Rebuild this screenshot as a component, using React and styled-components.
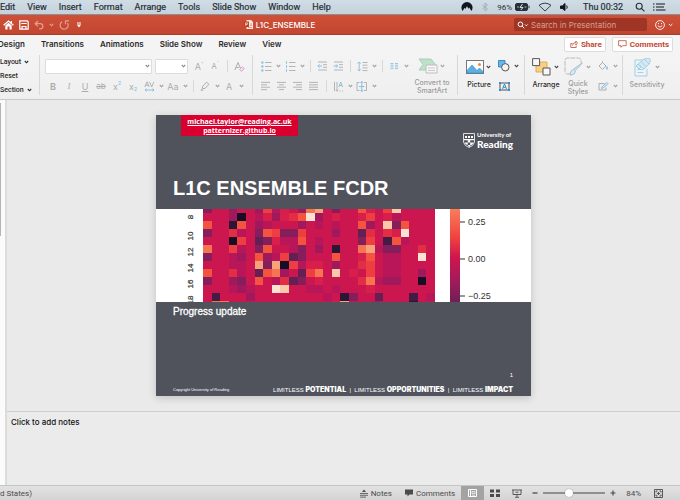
import React from "react";
import styled, { createGlobalStyle, css } from "styled-components";

const Global = createGlobalStyle`
  * { box-sizing: border-box; }
  html, body { margin: 0; padding: 0; }
  body { font-family: Inter, "Liberation Sans", sans-serif; font-size: 8px; color: #2b2b2b; }
  button, input, select { font: inherit; color: inherit; }
  button { background: none; border: 0; padding: 0; margin: 0; }
  svg { display: block; flex: none; }
`;

const RED = "#c43e1c";
const BLUE = "#2f8fd0";
const OFF = "#adadad";
const OFFBLUE = "#7dbde0";
const NARROW = 'Roboto, "Liberation Sans", sans-serif';

const Window = styled.div`
  display: flex;
  flex-direction: column;
  min-height: 100vh;
  overflow: hidden;
  background: #ebebeb;
`;

/* ---------- system menu ---------- */
const MenuBar = styled.nav`
  display: flex;
  align-items: center;
  justify-content: space-between;
  height: 15px;
  background: linear-gradient(#d0dde6, #c6d2da);
  border-bottom: 1px solid #8d8f93;
  color: #26303a;
  font-family: ${NARROW};
  font-size: 9px;
  white-space: nowrap;
`;
const Menus = styled.div`
  display: flex;
  gap: 12px;
`;
const MenuButton = styled.button`
  line-height: 14px;
  -webkit-text-stroke: 0.2px currentColor;
`;
const Tray = styled.div`
  display: flex;
  align-items: center;
  gap: 8px;
  padding-right: 14px;
`;
const Clock = styled.span`
  padding: 0 4px 0 6px;
  -webkit-text-stroke: 0.2px currentColor;
`;
const Charge = styled.span`
  display: flex;
  align-items: center;
  gap: 3px;
  font-size: 8px;
`;

/* ---------- title bar ---------- */
const TitleBar = styled.header`
  display: flex;
  align-items: center;
  height: 20px;
  background: linear-gradient(#cf5038, #c14630);
  border-bottom: 1px solid #a93c28;
  color: #fff;
`;
const QuickTools = styled.div`
  display: flex;
  flex: 245;
  align-items: center;
  gap: 5px;
  padding-left: 3px;
`;
const QuickButton = styled.button`
  display: flex;
  align-items: center;
  opacity: ${(p) => (p.$dim ? 0.45 : 1)};
`;
const DocTitle = styled.h1`
  display: flex;
  align-items: center;
  gap: 3px;
  margin: 0;
  font-size: 8px;
  font-weight: 500;
  white-space: nowrap;
`;
const TitleRight = styled.div`
  display: flex;
  flex: 365;
  align-items: center;
  justify-content: flex-end;
  gap: 8px;
  padding-right: 6px;
`;
const SearchBox = styled.label`
  display: flex;
  align-items: center;
  gap: 2px;
  width: 133px;
  height: 13px;
  padding-left: 3px;
  border-radius: 2px;
  background: #9f3625;
  input {
    flex: 1;
    min-width: 0;
    padding: 0;
    border: 0;
    outline: 0;
    background: none;
    font-size: 8px;
    line-height: 12px;
  }
  input::placeholder { color: #dd9c90; opacity: 1; }
`;

/* ---------- ribbon ---------- */
const Tabs = styled.nav`
  display: flex;
  align-items: center;
  justify-content: space-between;
  height: 18px;
  background: #f5f4f4;
`;
const TabList = styled.div`
  display: flex;
  gap: 16px;
`;
const Tab = styled.button`
  font-size: 8px;
  font-weight: 600;
  white-space: nowrap;
`;
const CutTab = styled(Tab)`
  display: flex;
  justify-content: flex-end;
  width: 25px;
  overflow: hidden;
`;
const Actions = styled.div`
  display: flex;
  gap: 6px;
  padding-right: 7px;
`;
const ActionButton = styled.button`
  display: flex;
  align-items: center;
  gap: 3px;
  height: 15px;
  padding: 0 3px 0 5px;
  border: 1px solid #dedcdc;
  border-radius: 2px;
  background: #fff;
  color: #c04a35;
  font-family: ${NARROW};
  font-size: 8px;
  font-weight: 700;
`;
const Ribbon = styled.section`
  display: flex;
  height: 47px;
  padding: 2px 0 4px;
  background: linear-gradient(#f5f4f4, #f0efef);
  border-bottom: 1px solid #c9c9c9;
`;
const Group = styled.div`
  display: flex;
  flex: none;
  width: ${(p) => (p.$w ? p.$w + "px" : "auto")};
  gap: ${(p) => p.$gap || 0}px;
  padding: 0 0 0 ${(p) => p.$pad || 0}px;
  border-left: ${(p) => (p.$first ? 0 : 1)}px solid #d9d8d8;
`;
const TextStack = styled.div`
  display: flex;
  flex-direction: column;
  align-items: flex-start;
`;
const TextButton = styled.button`
  display: flex;
  align-items: center;
  gap: 3px;
  line-height: 14px;
  font-family: ${NARROW};
  font-size: 7px;
  font-weight: 500;
`;
const Rows = styled.div`
  display: flex;
  flex-direction: column;
  gap: 4px;
  padding-top: 3px;
`;
const Row = styled.div`
  display: flex;
  align-items: center;
  height: 16px;
`;
const Tool = styled.button`
  display: flex;
  align-items: center;
  justify-content: center;
  width: 16px;
  height: 16px;
  color: ${OFF};
  font-size: ${(p) => (p.$small ? 8 : 9)}px;
  ${(p) => p.$bold && css`font-weight: 700;`}
  ${(p) => p.$italic && css`font-family: "Liberation Serif", serif; font-style: italic;`}
  ${(p) => p.$line && css`text-decoration: ${p.$line};`}
  sup, sub { font-size: 5px; line-height: 5px; color: ${OFFBLUE}; }
  sup { align-self: flex-start; padding-top: 3px; }
  sub { align-self: flex-end; padding-bottom: 2px; }
`;
const Drop = styled.button`
  display: flex;
  align-items: center;
  justify-content: center;
  width: 8px;
  height: 16px;
  color: ${(p) => (p.$on ? "#444" : "#a0a0a0")};
`;
const Sep = styled.span`
  width: 1px;
  height: 12px;
  margin: 0 3px 0 4px;
  background: #d9d8d8;
`;
const Pick = styled.div`
  display: flex;
  align-items: center;
  justify-content: flex-end;
  width: ${(p) => p.$w}px;
  height: 15px;
  margin-right: 3px;
  padding-right: 1px;
  border: 1px solid #dddcdc;
  border-radius: 1px;
  background: #fff;
  color: #888;
  select {
    flex: 1;
    min-width: 0;
    height: 12px;
    padding: 0;
    border: 0;
    outline: 0;
    appearance: none;
    background: none;
  }
`;
const BigTool = styled.div`
  display: flex;
  flex-direction: column;
  align-items: center;
  width: ${(p) => p.$w}px;
  padding-top: 2px;
  color: ${(p) => (p.$on ? "#2b2b2b" : "#9b9b9b")};
`;
const BigTop = styled.div`
  display: flex;
  align-items: center;
  height: 20px;
  gap: 1px;
`;
const BigLabel = styled.span`
  padding-top: 4px;
  font-size: 7px;
  font-weight: 500;
  line-height: 8px;
  text-align: center;
`;

/* ---------- workspace ---------- */
const Workspace = styled.main`
  display: flex;
  flex: 1;
`;
const ThumbPane = styled.aside`
  width: 7px;
  padding-top: 3px;
  background: #fbfbfb;
  border-right: 2px solid #dcdcdc;
`;
const Thumb = styled.div`
  width: 1px;
  height: 133px;
  background: #b4b4b4;
`;
const Editor = styled.div`
  display: flex;
  flex: 1;
  flex-direction: column;
`;
const Canvas = styled.div`
  display: flex;
  flex: 1;
  align-items: center;
  justify-content: center;
  background: #eaeaea;
`;
const Slide = styled.article`
  display: flex;
  flex-direction: column;
  width: 375px;
  background: #50535b;
  box-shadow: 0 2px 8px rgba(0, 0, 0, 0.18);
  color: #fff;
  font-family: "Liberation Sans", Arial, sans-serif;
`;
const SlideHead = styled.header`
  display: flex;
  flex-direction: column;
  justify-content: space-between;
  height: 94px;
`;
const SlideTop = styled.div`
  display: flex;
  align-items: flex-start;
  justify-content: space-between;
  padding: 0 18px 0 25px;
`;
const Contact = styled.address`
  display: flex;
  flex-direction: column;
  align-items: center;
  width: 117px;
  padding: 2px 0 1px;
  background: #d9002f;
  font-family: "Open Sans", sans-serif;
  font-size: 7px;
  font-style: normal;
  font-weight: 700;
  line-height: 9px;
  a { color: #fff; text-decoration: underline; }
`;
const Brand = styled.div`
  display: flex;
  align-items: center;
  gap: 2px;
  padding-top: 16px;
`;
const BrandText = styled.div`
  display: flex;
  flex-direction: column;
  font-family: Lato, sans-serif;
  font-size: 6px;
  font-weight: 700;
  line-height: 8px;
`;
const BrandName = styled.strong`
  font-size: 10px;
  line-height: 11px;
`;
const SlideTitle = styled.h2`
  margin: 0;
  padding: 0 17px 9px;
  font-size: 20px;
  line-height: 24px;
  font-weight: 700;
`;
const Chart = styled.svg`
  width: 100%;
  background: #fff;
`;
const SlideBody = styled.div`
  display: flex;
  flex-direction: column;
  justify-content: space-between;
  height: 94px;
  padding: 4px 18px 2px 17px;
`;
const Subtitle = styled.p`
  margin: 0;
  font-size: 10px;
  line-height: 12px;
  -webkit-text-stroke: 0.3px #fff;
`;
const SlideFoot = styled.footer`
  display: flex;
  flex-direction: column;
`;
const PageNumber = styled.span`
  align-self: flex-end;
  font-size: 6px;
  line-height: 8px;
`;
const FootLine = styled.div`
  display: flex;
  align-items: center;
  justify-content: space-between;
  padding-top: 7px;
  font-size: 4px;
  line-height: 8px;
`;
const Motto = styled.span`
  font-size: 6px;
  white-space: pre;
  b { font-family: Inter, sans-serif; font-size: 7px; font-weight: 900; }
`;
const Notes = styled.section`
  height: 74px;
  padding: 5px 4px;
  border-top: 1px solid #cfcfcf;
  color: #111;
  font-size: 8px;
  line-height: 10px;
  font-weight: 500;
`;

/* ---------- status bar ---------- */
const StatusBar = styled.footer`
  display: flex;
  align-items: center;
  justify-content: space-between;
  height: 15px;
  border-top: 1px solid #c4c6c4;
  background: linear-gradient(#e2e2e2, #d4d4d4);
  color: #4b4b4b;
  font-family: ${NARROW};
`;
const Language = styled.button`
  white-space: nowrap;
`;
const StatusTools = styled.div`
  display: flex;
  align-items: center;
  height: 14px;
  padding-right: 17px;
`;
const StatusButton = styled.button`
  display: flex;
  align-items: center;
  justify-content: center;
  gap: 3px;
  height: 14px;
  min-width: ${(p) => p.$w || 10}px;
  margin-right: ${(p) => p.$after || 0}px;
  background: ${(p) => (p.$active ? "#a3a3a3" : "none")};
  color: ${(p) => (p.$active ? "#fff" : "inherit")};
`;
const Zoom = styled.input`
  width: 62px;
  height: 10px;
  margin: 0 3px;
  appearance: none;
  background: linear-gradient(#8f8f8f, #8f8f8f) center / 100% 2px no-repeat;
  &::-webkit-slider-thumb {
    appearance: none;
    width: 8px;
    height: 8px;
    border-radius: 50%;
    background: #fff;
    box-shadow: 0 0 1px #666;
  }
`;

/* ---------- icons ---------- */
const Svg = ({ w = 12, h = 12, children, ...r }) => (
  <svg width={w} height={h} viewBox={`0 0 ${w} ${h}`} fill="none" stroke="currentColor" strokeWidth="1" aria-hidden="true" {...r}>
    {children}
  </svg>
);
const Chevron = () => (
  <Svg w={5} h={4} strokeWidth="1.1"><path d="M.8 1 2.5 2.8 4.2 1" /></Svg>
);
const Lines = ({ rows }) => (
  <Svg w={10} h={10} strokeWidth=".9">
    {rows.map(([x, w], i) => <path key={i} d={`M${x} ${1.4 + i * 2.4}h${w}`} />)}
  </Svg>
);
const ListIcon = ({ numbered }) => (
  <Svg w={11} h={11} strokeWidth=".9">
    {[1.5, 5.5, 9.5].map((y) => (
      <g key={y}>
        {numbered
          ? <path d={`M1.5 ${y - 1.3}v2.6`} stroke={OFFBLUE} />
          : <rect x=".4" y={y - 1} width="2" height="2" fill={OFFBLUE} stroke="none" />}
        <path d={`M4 ${y}h6.5`} />
      </g>
    ))}
  </Svg>
);
const IndentIcon = ({ right }) => (
  <Svg w={11} h={10} strokeWidth=".9">
    <path d="M1 1h9M6 3.7h4M6 6.3h4M1 9h9" />
    <path d={right ? "M.5 5h4M3 3.3 4.7 5 3 6.7" : "M1 5h4M2.5 3.3.8 5l1.7 1.7"} stroke={OFFBLUE} />
  </Svg>
);
const SpacingIcon = () => (
  <Svg w={11} h={11} strokeWidth=".9">
    <path d="M2.2 1v9M.6 2.6 2.2 1l1.6 1.6M.6 8.4 2.2 10l1.6-1.6" stroke={OFFBLUE} />
    <path d="M5.5 1.5h5M5.5 4.2h5M5.5 6.9h5M5.5 9.6h5" />
  </Svg>
);

/* ---------- heat map ---------- */
const SHADES = {
  ".": "#cb1650", a: "#d81e4b", b: "#e22e45", c: "#ee3e41", o: "#f4543f", O: "#f77450",
  p: "#f6a37c", w: "#f9c9aa", W: "#fbe3d3", m: "#b9165a", n: "#a0195c", u: "#841f5b",
  v: "#622054", d: "#431c46", k: "#2b1636", K: "#150e25",
};
const CELLS = [
  "u..n..ncma.nOp.u..oa.cw....",
  "...nK.manaboWn.a..ac.am....",
  "o..ko.nm...n.m.m..on.wuo...",
  "u..bm.uocuuc...n..vb.baW...",
  "...Kc.vuammo.m....uc.dom...",
  "O..cm.uo..mu.n.k..Opmuu..b.",
  "u..mn.onmcvu...o..ao.mm..W.",
  "...mm.pupKcmaa.n..bc.mm....",
  "o..bm.voOn.vcO.w.a.c.mm..n.",
  "u..nu.o.mbvu.a....bOmnn..K.",
  "...mnm..Ww..mm.m...a.......",
  ".d...n........m.ku..v...d.m",
  ".OO............ap...m...k..",
];
const Y_TICKS = [["8", 8], ["10", 27], ["12", 43], ["14", 59], ["16", 75], ["18", 91]];
const BAR_TICKS = [["0.25", 13], ["0.00", 50], ["−0.25", 87]];

function HeatMap() {
  const left = 47, cell = 232 / 27;
  return (
    <Chart viewBox="0 0 375 93" role="img" aria-label="Ensemble heat map">
      <defs>
        <linearGradient id="scale" x1="0" y1="0" x2="0" y2="1">
          <stop offset="0" stopColor="#fa7d5a" />
          <stop offset=".3" stopColor="#f0443f" />
          <stop offset=".52" stopColor="#cf164e" />
          <stop offset=".75" stopColor="#a8195b" />
          <stop offset="1" stopColor="#6f1f58" />
        </linearGradient>
      </defs>
      <g shapeRendering="crispEdges">
        {CELLS.map((row, r) =>
          [...row].map((k, c) => (
            <rect key={`${r}-${c}`} x={left + c * cell} y={r ? r * 8 - 4 : 0} width={cell} height={r ? 8 : 4} fill={SHADES[k]} />
          ))
        )}
      </g>
      <g fill="#333" fontSize="8" textAnchor="middle" stroke="#333" strokeWidth=".2">
        {Y_TICKS.map(([t, y]) => <text key={t} transform={`translate(37 ${y}) rotate(-90)`}>{t}</text>)}
      </g>
      <rect x="294" width="10" height="93" fill="url(#scale)" />
      <g fill="#333" fontSize="9">
        {BAR_TICKS.map(([t, y]) => (
          <g key={t}>
            <path d={`M304 ${y}h5`} stroke="#333" />
            <text x="312" y={y + 3}>{t}</text>
          </g>
        ))}
      </g>
    </Chart>
  );
}

const MENUS = ["Edit", "View", "Insert", "Format", "Arrange", "Tools", "Slide Show", "Window", "Help"];
const TABS = ["Transitions", "Animations", "Slide Show", "Review", "View"];

export default function App() {
  return (
    <Window>
      <Global />
      <MenuBar aria-label="System menu">
        <Menus>{MENUS.map((m) => <MenuButton key={m}>{m}</MenuButton>)}</Menus>
        <Tray>
          <Svg w={12} h={10} stroke="none" fill="#10161d"><path d="M1.6 9A5.6 5.6 0 0 1 .4 5.600a5.600 5.600 0 0 1 11.200 0A5.600 5.600 0 0 1 10.400 9L8.300 5.500l-.8 1.300L6 4.200 4.300 7l-.7-1.200z" /></Svg>
          <Svg w={8} h={10} stroke="#a3b0ba"><path d="m1.500 3 5 4L4 9V1l2.500 2-5 4" /></Svg>
          <Charge>
            96%
            <Svg w={15} h={8} stroke="#26303a">
              <rect x=".5" y=".5" width="12" height="7" rx="1.500" fill="#26303a" />
              <path d="M14 2.700v2.600" />
              <path d="M7.500 1 5 4.400h3L5.800 7" stroke="#dce6ed" />
              <path d="M2 4h2M9.500 4h2" stroke="#9fabb4" />
            </Svg>
          </Charge>
          <Svg w={14} h={10} stroke="#26303a" strokeWidth=".9"><path d="M7 9 1 3.300Q7-1 13 3.300z" /></Svg>
          <Svg w={9} h={8} stroke="#10161d"><path d="M.5 3v2.500h1.800L5 7.500v-7L2.300 3z" fill="#10161d" /><path d="M6.700 2.500q1 1.600 0 3.200" /></Svg>
          <Clock>Thu 00:32</Clock>
          <Svg w={10} h={10} stroke="#26303a" strokeWidth="1.100"><circle cx="4.200" cy="4.200" r="3" /><path d="m6.400 6.400 3 3" /></Svg>
          <Svg w={13} h={8} stroke="#10161d" strokeWidth="1.200"><path d="M0 1h1.500M3 1h9M0 4h1.500M3 4h8M0 7h1.500M3 7h9.500" /></Svg>
        </Tray>
      </MenuBar>

      <TitleBar>
        <QuickTools>
          <QuickButton aria-label="Home"><Svg w={11} h={10} strokeWidth="1.300"><path d="M.6 5.300 5.500 1l4.900 4.300M8.400 1v2" /><path d="M2.300 5.500v3.900h2.200V6.600h2v2.800h2.200V5.500L5.500 2.800z" fill="#fff" stroke="none" /></Svg></QuickButton>
          <QuickButton aria-label="Save"><Svg w={10} h={10} strokeWidth="1.200"><path d="M.8.8h7.400l1 1v7.400H.8z" /><path d="M2.300 3.500h5.400M3 9V6.500h4V9" /></Svg></QuickButton>
          <QuickButton $dim aria-label="Undo"><Svg w={10} h={10} strokeWidth="1.300"><path d="M4 1 1.200 3.700 4 6.400M1.500 3.700h4.800q2.500 0 2.500 2.500T6.300 8.800H5" /></Svg></QuickButton>
          <QuickButton $dim aria-label="Undo options"><Chevron /></QuickButton>
          <QuickButton $dim aria-label="Repeat"><Svg w={11} h={10} strokeWidth="1.200"><path d="M3 1.800A4 4 0 1 0 8.500 3M10 .8H6.500v3.500" /></Svg></QuickButton>
          <QuickButton aria-label="Customize toolbar"><Svg w={8} h={6}><path d="M2 1h4" /><path d="M1.800 2.600h4.400L4 5.400z" fill="#fff" stroke="none" /></Svg></QuickButton>
        </QuickTools>
        <DocTitle>
          <Svg w={9} h={9} stroke="none"><path d="M2.500 0H7l2 2v7H2.500z" fill="#f7e9e4" /><path d="M0 1.500h5v5.500H0z" fill={RED} /><path d="M1.700 5.800V2.800h1.100a.8.8 0 0 1 0 1.700H1.900" stroke="#fff" strokeWidth=".7" /><path d="M6 4h2M6 5.500h2M4 7.500h4" stroke="#c86a50" strokeWidth=".6" /></Svg>
          L1C_ENSEMBLE
        </DocTitle>
        <TitleRight>
          <SearchBox>
            <Svg w={12} h={8}><circle cx="3.400" cy="3.300" r="2.300" /><path d="m5 5 2.300 2.300M8 3.500l1.300 1.300 1.300-1.300" /></Svg>
            <input aria-label="Search in Presentation" placeholder="Search in Presentation" />
          </SearchBox>
          <QuickButton aria-label="Feedback">
            <Svg w={19} h={10} strokeWidth=".9"><circle cx="5" cy="5" r="4.400" /><path d="M2.800 5.800q2.200 2.600 4.400 0M3.500 3v1.200M6.500 3v1.200M14 4l1.700 1.700L17.400 4" /></Svg>
          </QuickButton>
        </TitleRight>
      </TitleBar>

      <Tabs aria-label="Ribbon tabs">
        <TabList>
          <CutTab>Design</CutTab>
          {TABS.map((t) => <Tab key={t}>{t}</Tab>)}
        </TabList>
        <Actions>
          <ActionButton><Svg w={8} h={8} strokeWidth=".8"><path d="M2.500 3.500H.8v4h5.400V5.500M2.500 5.500q.2-3 3.300-3V1l1.800 2-1.800 2V3.600" /></Svg>Share</ActionButton>
          <ActionButton><Svg w={9} h={8} strokeWidth=".8"><path d="M.6.7h7.600v5H4.500L3 7.300V5.700H.6z" /></Svg>Comments</ActionButton>
        </Actions>
      </Tabs>

      <Ribbon>
        <Group $w={39} $first>
          <TextStack>
            <TextButton>Layout <Chevron /></TextButton>
            <TextButton>Reset</TextButton>
            <TextButton>Section <Chevron /></TextButton>
          </TextStack>
        </Group>

        <Group $w={213} $pad={5}>
          <Rows>
            <Row>
              <Pick $w={107}><select aria-label="Font name" /><Chevron /></Pick>
              <Pick $w={33}><select aria-label="Font size" /><Chevron /></Pick>
              <Tool aria-label="Increase font size">A<sup>^</sup></Tool>
              <Tool aria-label="Decrease font size" $small>A<sup>ˇ</sup></Tool>
              <Sep />
              <Tool aria-label="Clear formatting">
                <Svg w={11} h={11}><path d="M.8 9 4 1.500 7.200 9M2 6.500h3" /><path d="m5.500 8.500 2.800-2.800 2 2-2.800 2.800z" stroke="#d9a9cf" fill="#f3dcef" /></Svg>
              </Tool>
            </Row>
            <Row>
              <Tool $bold>B</Tool>
              <Tool $italic>I</Tool>
              <Tool $line="underline">U</Tool>
              <Tool $small $line="line-through">ab</Tool>
              <Tool aria-label="Superscript">x<sup>2</sup></Tool>
              <Tool aria-label="Subscript">x<sub>2</sub></Tool>
              <Tool aria-label="Character spacing">
                <Svg w={11} h={11} strokeWidth=".9"><path d="M.8 6 3 .8 5.200 6M1.600 4.300h2.800M5.500.8 7.700 6 9.900.8" /><path d="M1 9h9M2.500 7.700 1 9l1.500 1.300M8.500 7.700 10 9l-1.500 1.300" stroke={OFFBLUE} /></Svg>
              </Tool>
              <Drop aria-label="Spacing options"><Chevron /></Drop>
              <Tool>Aa</Tool>
              <Drop aria-label="Case options"><Chevron /></Drop>
              <Sep />
              <Tool aria-label="Highlight">
                <Svg w={10} h={10}><path d="m2.500 5.500 4-4.300L9 3.300 5 7.500H2.500zM2.500 7.500.8 9.200h2.500" /></Svg>
              </Tool>
              <Drop aria-label="Highlight colours"><Chevron /></Drop>
              <Tool>A</Tool>
              <Drop aria-label="Font colours"><Chevron /></Drop>
            </Row>
          </Rows>
        </Group>

        <Group $w={205} $pad={5} $gap={3}>
          <Rows>
            <Row>
              <Tool aria-label="Bullets"><ListIcon /></Tool>
              <Drop aria-label="Bullet options"><Chevron /></Drop>
              <Tool aria-label="Numbering"><ListIcon numbered /></Tool>
              <Drop aria-label="Numbering options"><Chevron /></Drop>
              <Sep />
              <Tool aria-label="Decrease indent"><IndentIcon /></Tool>
              <Tool aria-label="Increase indent"><IndentIcon right /></Tool>
              <Sep />
              <Tool aria-label="Line spacing"><SpacingIcon /></Tool>
              <Drop aria-label="Line spacing options"><Chevron /></Drop>
              <Sep />
              <Tool aria-label="Columns">
                <Svg w={9} h={8} stroke={OFFBLUE} strokeWidth=".8"><path d="M.5 1.500h3M.5 3.200h3M.5 4.900h3M.5 6.600h3M5 1.500h3M5 3.200h3M5 4.900h3M5 6.600h3" /></Svg>
              </Tool>
              <Drop aria-label="Column options"><Chevron /></Drop>
            </Row>
            <Row>
              <Tool aria-label="Align left"><Lines rows={[[0, 9], [0, 6], [0, 9], [0, 6]]} /></Tool>
              <Tool aria-label="Align centre"><Lines rows={[[0, 9], [2, 5], [0, 9], [2, 5]]} /></Tool>
              <Tool aria-label="Align right"><Lines rows={[[0, 9], [3, 6], [0, 9], [3, 6]]} /></Tool>
              <Tool aria-label="Justify"><Lines rows={[[0, 9], [0, 9], [0, 9], [0, 9]]} /></Tool>
              <Sep />
              <Tool aria-label="Text direction">
                <Svg w={11} h={11} strokeWidth=".9"><path d="M1.500.8v9.400M4 .8v9.400M2.700 8.800 4 10.200l1.300-1.400M6.500 10h1M9 10h1" /><path d="M5.800 6 7.700 1l1.900 5M6.500 4.500h2.400" stroke={OFFBLUE} /></Svg>
              </Tool>
              <Drop aria-label="Text direction options"><Chevron /></Drop>
              <Tool aria-label="Align text">
                <Svg w={12} h={11} strokeWidth=".9"><path d="M3.500 1.500H1v8h2.500M8 1.500h2.500v8H8" /><path d="M5.800.5v10M4.500 2 5.800.5 7.100 2M4.500 9l1.300 1.500L7.100 9M3 5.500h5.500" stroke={OFFBLUE} /></Svg>
              </Tool>
              <Drop aria-label="Align text options"><Chevron /></Drop>
            </Row>
          </Rows>
          <BigTool $w={38}>
            <BigTop>
              <Svg w={20} h={16} strokeWidth=".9">
                <path d="M1 1h12l4.500 5.500L13 12H1l4-5.500z" fill="#bfe0ca" stroke="#9fcfb0" />
                <path d="M8 7h11v8H8z" fill="#f6f6f6" stroke="#b9b9b9" /><path d="M10 10h7M10 12.500h7" stroke="#c4c4c4" />
              </Svg>
              <Drop aria-label="SmartArt options"><Chevron /></Drop>
            </BigTop>
            <BigLabel>Convert to SmartArt</BigLabel>
          </BigTool>
        </Group>

        <Group $w={67} $pad={6} $gap={2}>
          <BigTool $w={30} $on>
            <BigTop>
              <Svg w={18} h={14}>
                <rect x=".5" y=".5" width="17" height="13" fill="#fff" stroke="#777" />
                <path d="M1 10.500 6 5l5 5.500 2.500-2.500 3.500 3.500V13H1z" fill="#5bb0e2" stroke={BLUE} strokeWidth=".6" />
                <circle cx="13.500" cy="4.500" r="1.500" fill="#f08a3a" stroke="none" />
              </Svg>
              <Drop $on aria-label="Picture options"><Chevron /></Drop>
            </BigTop>
            <BigLabel>Picture</BigLabel>
          </BigTool>
          <Rows>
            <Row>
              <Tool aria-label="Shapes">
                <Svg w={12} h={12}><path d="M.5.500h6.500v6.500H.5z" fill="#6db6e4" stroke={BLUE} /><circle cx="7.300" cy="7.300" r="3.700" fill="#f5f4f4" stroke="#555" /></Svg>
              </Tool>
              <Drop $on aria-label="Shape options"><Chevron /></Drop>
            </Row>
            <Row>
              <Tool aria-label="Text box">
                <Svg w={11} h={9}><path d="M1 1h9v7H1z" stroke="#555" /><path d="M3.500 7 5.500 2l2 5M4.300 5.300h2.400" stroke={BLUE} /><path d="M0 0h2v2H0zM9 0h2v2H9zM0 7h2v2H0zM9 7h2v2H9z" fill={BLUE} stroke="none" /></Svg>
              </Tool>
            </Row>
          </Rows>
        </Group>

        <Group $w={98} $pad={6} $gap={2}>
          <BigTool $w={30} $on>
            <BigTop>
              <Svg w={19} h={18}>
                <path d="M4 4h11v10H4z" fill="#f7cf86" stroke="#e6a94a" />
                <path d="M.6.6h7v7h-7zM11 10h7v7h-7z" fill="#f7f7f7" stroke="#555" />
              </Svg>
              <Drop $on aria-label="Arrange options"><Chevron /></Drop>
            </BigTop>
            <BigLabel>Arrange</BigLabel>
          </BigTool>
          <BigTool $w={30}>
            <BigTop>
              <Svg w={19} h={19}>
                <path d="M6 17H3.500A2.500 2.500 0 0 1 1 14.500v-11A2.500 2.500 0 0 1 3.500 1h11A2.500 2.500 0 0 1 17 3.500V6" stroke="#b9b9b9" strokeDasharray="5 1" />
                <path d="m18.300 6-7 7.500-1.600-1.500zM9.500 12.500q-3 .5-3.500 5.500 5 .2 5.300-4" fill="#dbe9f1" stroke="#9cbfd3" />
              </Svg>
              <Drop aria-label="Quick style options"><Chevron /></Drop>
            </BigTop>
            <BigLabel>Quick Styles</BigLabel>
          </BigTool>
          <Rows>
            <Row>
              <Tool aria-label="Shape fill"><Svg w={10} h={10}><path d="M1 5 4.500 1.500 8 5 4.500 8.500zM4.500 1.500V.2" /><path d="M9 5.500v3" stroke={OFFBLUE} strokeWidth="1.500" /></Svg></Tool>
              <Drop aria-label="Fill colours"><Chevron /></Drop>
            </Row>
            <Row>
              <Tool aria-label="Shape outline"><Svg w={11} h={9}><path d="M6.500 1.500H1v6.500h7V5.500" /><path d="m3.500 6.500.7-2L9 .5l1.200 1.200-4.800 4z" stroke={OFFBLUE} /></Svg></Tool>
              <Drop aria-label="Outline colours"><Chevron /></Drop>
            </Row>
          </Rows>
        </Group>

        <Group $pad={6}>
          <BigTool $w={36}>
            <BigTop>
              <Svg w={19} h={19} stroke="#a7cfe2">
                <path d="M10 2H2v16h12v-7" fill="#eaf4f9" /><path d="M4.500 11.500h6M4.500 14.500h6" />
                <path d="m5 6 6-5 5 5-5 5zM8 3.500l5 5M11 1l5-1 1.500 2-1.500 4M3 8l2-2 3 3-2 2z" fill="#d5e9f3" />
              </Svg>
              <Drop aria-label="Sensitivity options"><Chevron /></Drop>
            </BigTop>
            <BigLabel>Sensitivity</BigLabel>
          </BigTool>
        </Group>
      </Ribbon>

      <Workspace>
        <ThumbPane aria-label="Slides"><Thumb /></ThumbPane>
        <Editor>
          <Canvas>
            <Slide>
              <SlideHead>
                <SlideTop>
                  <Contact>
                    <a href="mailto:michael.taylor@reading.ac.uk">michael.taylor@reading.ac.uk</a>
                    <a href="#patternizer">patternizer.github.io</a>
                  </Contact>
                  <Brand>
                    <Svg w={12} h={15} stroke="none">
                      <path d="M.5.500h11v8.500q-.7 3.700-5.500 5.500Q1.200 12.700.5 9z" fill="#50535b" stroke="#fff" strokeWidth=".8" />
                      <path d="M2 3h2v2H2zM5 3h2v2H5zM8 3h2v2H8zM1 6h10v1.200H1zM4.800 7h2.400v2.500H4.800zM1.500 9.500h3.300v2.300L3 11.500zM7.200 9.500h3.500L9 11.800l-1.800.5z" fill="#fff" />
                      <path d="M4.800 12h2.400v1.500L6 14z" fill="#fff" />
                    </Svg>
                    <BrandText>
                      <span>University of</span>
                      <BrandName>Reading</BrandName>
                    </BrandText>
                  </Brand>
                </SlideTop>
                <SlideTitle>L1C ENSEMBLE FCDR</SlideTitle>
              </SlideHead>
              <HeatMap />
              <SlideBody>
                <Subtitle>Progress update</Subtitle>
                <SlideFoot>
                  <PageNumber>1</PageNumber>
                  <FootLine>
                    <span>Copyright University of Reading</span>
                    <Motto>LIMITLESS <b>POTENTIAL</b>  |  LIMITLESS <b>OPPORTUNITIES</b>  |  LIMITLESS <b>IMPACT</b></Motto>
                  </FootLine>
                </SlideFoot>
              </SlideBody>
            </Slide>
          </Canvas>
          <Notes>Click to add notes</Notes>
        </Editor>
      </Workspace>

      <StatusBar>
        <Language>d States)</Language>
        <StatusTools>
          <StatusButton $after={13}><Svg w={8} h={9} strokeWidth=".8"><path d="M0 4.500h8M0 6.300h8M0 8.100h6" /><path d="M4 .5 6 3H2z" fill="currentColor" stroke="none" /></Svg>Notes</StatusButton>
          <StatusButton $after={6}><Svg w={8} h={8} stroke="none" fill="currentColor"><path d="M0 .5h8v5H4.500L2.500 7.500v-2H0z" /></Svg>Comments</StatusButton>
          <StatusButton $active $w={23} $after={6} aria-label="Normal view"><Svg w={9} h={8}><path d="M.5.500h8v7h-8z" /><path d="M2.500 1v6" /><path d="M4 2.500h3v2H4zM4 6.200h3" strokeWidth=".7" /></Svg></StatusButton>
          <StatusButton $after={12} aria-label="Slide sorter"><Svg w={10} h={8} stroke="none" fill="currentColor"><path d="M0 .5h4v3H0zM6 .5h4v3H6zM0 5h4v3H0zM6 5h4v3H6z" /></Svg></StatusButton>
          <StatusButton $after={8} aria-label="Slide show"><Svg w={10} h={9} strokeWidth=".9"><path d="M0 1h10M1 1v4.500h8V1M5 5.500V8M3 8.300h4M3.500 3.200h3" /></Svg></StatusButton>
          <StatusButton aria-label="Zoom out"><Svg w={6} h={6}><path d="M.5 3h5" strokeWidth="1.300" /></Svg></StatusButton>
          <Zoom type="range" min="0" max="100" defaultValue="41" aria-label="Zoom" />
          <StatusButton $after={8} aria-label="Zoom in"><Svg w={6} h={6}><path d="M.5 3h5M3 .5v5" strokeWidth="1.200" /></Svg></StatusButton>
          <StatusButton $after={12}>84%</StatusButton>
          <StatusButton aria-label="Fit slide"><Svg w={9} h={9} strokeWidth=".9"><path d="M.5.500h8v8h-8z" /><path d="M2 3.500V2h1.500M5.500 2H7v1.500M7 5.500V7H5.500M3.500 7H2V5.500M4.500 3v3M3 4.500h3" /></Svg></StatusButton>
        </StatusTools>
      </StatusBar>
    </Window>
  );
}
